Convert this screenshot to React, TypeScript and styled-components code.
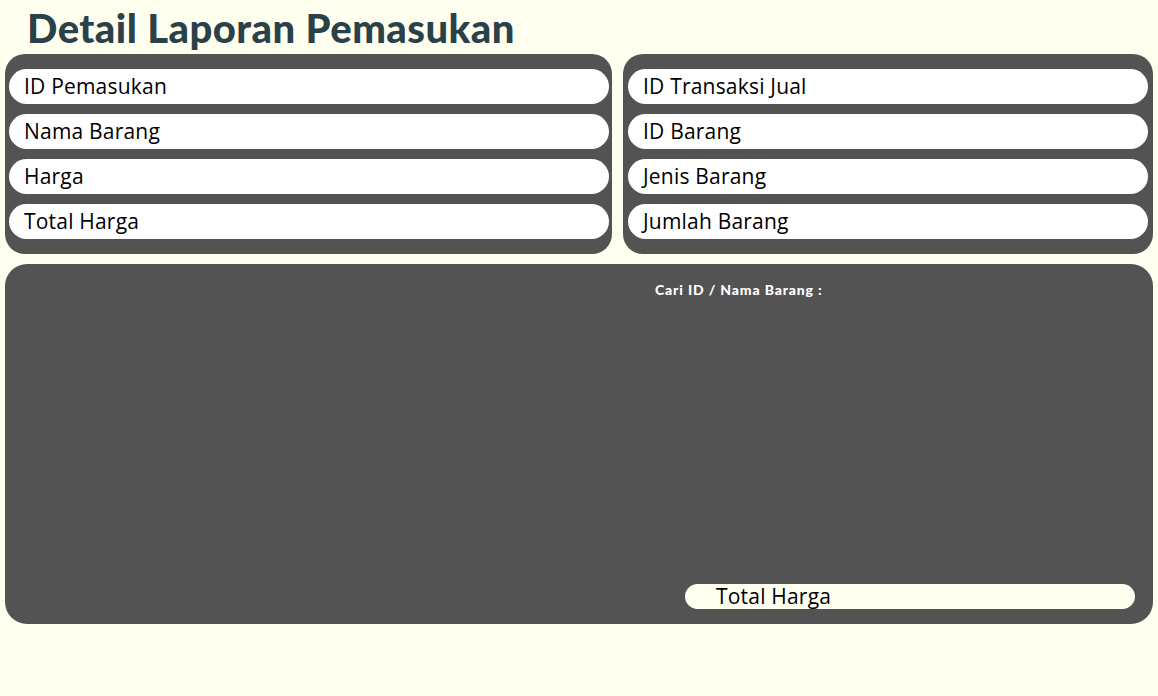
import React from "react";
import styled, { createGlobalStyle } from "styled-components";

const Global = createGlobalStyle`
  html, body { margin: 0; padding: 0; background: #fffff0; }
  body { font-family: "Open Sans", sans-serif; }
`;

const Page = styled.div`
  padding: 0 5px;
  display: flex;
  flex-direction: column;
`;

const Title = styled.h1`
  margin: 0;
  padding: 6px 0 0 22px;
  height: 48px;
  box-sizing: border-box;
  font-family: "Lato", sans-serif;
  font-weight: 900;
  font-size: 40px;
  line-height: 44px;
  color: #2b414a;
  letter-spacing: 0.45px;
`;

const TopRow = styled.div`
  display: flex;
  gap: 11px;
  margin-top: 6px;
`;

const Card = styled.div<{ $w: number; $pl: number; $pr: number }>`
  width: ${(p) => p.$w}px;
  box-sizing: border-box;
  background: #535353;
  border-radius: 20px;
  padding: 15px ${(p) => p.$pr}px 15px ${(p) => p.$pl}px;
  display: flex;
  flex-direction: column;
  gap: 10px;
`;

const Field = styled.div`
  height: 35px;
  background: #ffffff;
  border-radius: 18px;
  display: flex;
  align-items: center;
  padding-left: 15px;
  padding-bottom: 2px;
  box-sizing: border-box;
  font-family: "Open Sans", sans-serif;
  font-size: 21px;
  letter-spacing: 0.2px;
  color: #000;
`;

const Bottom = styled.div`
  margin-top: 10px;
  height: 360px;
  box-sizing: border-box;
  background: #535353;
  border-radius: 22px;
  display: flex;
  flex-direction: column;
  padding: 17px 18px 15px 0;
`;

const SearchLabel = styled.div`
  margin-left: 650px;
  font-family: "Lato", sans-serif;
  font-weight: 900;
  font-size: 14px;
  letter-spacing: 0.85px;
  color: #ffffff;
`;

const TotalBox = styled.div`
  margin-top: auto;
  margin-left: 680px;
  height: 25px;
  background: #fffff0;
  border-radius: 13px;
  display: flex;
  align-items: center;
  padding-left: 31px;
  padding-bottom: 1px;
  box-sizing: border-box;
  font-family: "Open Sans", sans-serif;
  font-size: 21px;
  letter-spacing: 0.2px;
  color: #000;
`;

const left = ["ID Pemasukan", "Nama Barang", "Harga", "Total Harga"];
const right = ["ID Transaksi Jual", "ID Barang", "Jenis Barang", "Jumlah Barang"];

export default function App() {
  return (
    <>
      <Global />
      <Page>
        <Title>Detail Laporan Pemasukan</Title>
        <TopRow>
          <Card $w={607} $pl={4} $pr={3}>
            {left.map((t) => (
              <Field key={t}>{t}</Field>
            ))}
          </Card>
          <Card $w={530} $pl={5} $pr={5}>
            {right.map((t) => (
              <Field key={t}>{t}</Field>
            ))}
          </Card>
        </TopRow>
        <Bottom>
          <SearchLabel>Cari ID / Nama Barang :</SearchLabel>
          <TotalBox>Total Harga</TotalBox>
        </Bottom>
      </Page>
    </>
  );
}
